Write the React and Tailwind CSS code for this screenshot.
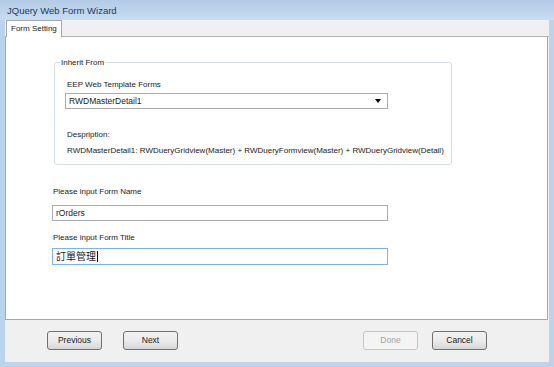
import React from "react";

const font = { fontFamily: '"Liberation Sans", "Noto Sans CJK TC", sans-serif' };

const WinButton = ({ children, disabled, className = "" }) => (
  <button
    className={
      (disabled
        ? "w-[55px] h-[19px] rounded-[3px] border border-[#c5c5c5] bg-[#f4f4f4] text-[8.5px] text-[#a0a0a0] "
        : "w-[55px] h-[19px] rounded-[3px] border border-[#707070] bg-gradient-to-b from-[#f2f2f2] via-[#ebebeb] to-[#d6d6d6] text-[8.5px] text-[#1a1a1a] ") +
      className
    }
  >
    {children}
  </button>
);

export default function App() {
  return (
    <div
      className="w-[554px] h-[367px] bg-[#bcd3ec] flex flex-col text-[#1a1a1a]"
      style={font}
    >
      <div className="h-[20px] flex items-center pl-[7px] pt-[3px] bg-gradient-to-b from-[#b3cbe6] to-[#c9dcf1] text-[9.5px] text-[#1e395b]">
        JQuery Web Form Wizard
      </div>
      <div className="flex-1 mx-[5px] mb-[5px] bg-[#f0f0f0] flex flex-col">
        <div className="h-[17px] flex items-end bg-[#f0f0f0] border-b border-[#b5b5b5] pl-[1px]">
          <div className="h-[17px] px-[4px] bg-white border border-b-0 border-[#a9a9a9] text-[8px] flex items-center -mb-px pb-px">
            Form Setting
          </div>
        </div>
        <div className="h-[283px] bg-white border border-t-0 border-[#a9a9a9] mr-[1px] pl-[46px] pt-[25px] text-[8px]">
          <div className="ml-[2px] w-[398px] h-[103px] relative border border-[#d5dfe5] rounded-[3px] pl-[12px] pt-[16px]">
            <span className="absolute left-[5px] -top-[6px] bg-white px-[1px]">Inherit From</span>
            <div className="mb-[2px]">EEP Web Template Forms</div>
            <div className="-ml-[2px] w-[323px] h-[16px] border border-[#abadb3] flex items-center justify-between pl-[3px] pr-[6px] text-[8.5px]">
              <span>RWDMasterDetail1</span>
              <svg width="6" height="4" viewBox="0 0 6 4"><path d="M0 0h6L3 4z" fill="#000" /></svg>
            </div>
            <div className="mt-[20px]">Despription:</div>
            <div className="mt-[4px] whitespace-nowrap">
              RWDMasterDetail1: RWDueryGridview(Master) + RWDueryFormview(Master) + RWDueryGridview(Detail)
            </div>
          </div>
          <div className="mt-[21px] ml-[1px]">Please input Form Name</div>
          <div className="mt-[7px] w-[336px] h-[16px] border border-[#abadb3] flex items-center pl-[3px] text-[8.5px]">
            rOrders
          </div>
          <div className="mt-[11px] ml-[1px]">Please input Form Title</div>
          <div className="mt-[4px] w-[336px] h-[17px] border border-[#7eb4ea] flex items-center pl-[3px] text-[10px]">
            訂單管理<span className="w-px h-[11px] bg-black ml-px" />
          </div>
        </div>
        <div className="flex-1 flex items-center pl-[42px] pb-[1px]">
          <WinButton>Previous</WinButton>
          <WinButton className="ml-[21px]">Next</WinButton>
          <WinButton disabled className="ml-[185px]">Done</WinButton>
          <WinButton className="ml-[14px]">Cancel</WinButton>
        </div>
      </div>
    </div>
  );
}
